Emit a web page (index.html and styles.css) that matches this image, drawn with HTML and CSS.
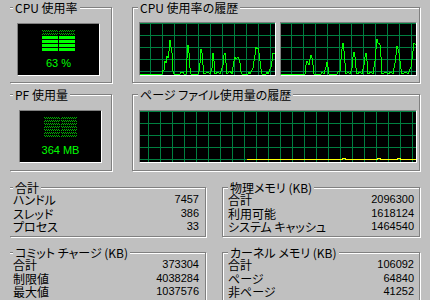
FILE: index.html
```html
<!DOCTYPE html>
<html lang="ja">
<head>
<meta charset="utf-8">
<title>パフォーマンス</title>
<link rel="stylesheet" href="styles.css">
</head>
<body>
<div class="page">
  <div class="row row-top">
    <section class="group group-left">
      <span class="legend legend-left">CPU 使用率</span>
      <div class="meter meter-cpu">
        <svg class="bars" width="33" height="21" viewBox="0 0 33 21" shape-rendering="crispEdges">
          <defs>
            <pattern id="dots1" width="2" height="2" patternUnits="userSpaceOnUse">
              <rect width="1" height="1" fill="#00b000"/><rect x="1" y="1" width="1" height="1" fill="#00b000"/>
            </pattern>
          </defs>
          <g fill="url(#dots1)">
            <rect x="0" y="0" width="16" height="2"/><rect x="17" y="0" width="16" height="2"/>
            <rect x="0" y="3" width="16" height="2"/><rect x="17" y="3" width="16" height="2"/>
          </g>
          <g fill="#00ff00">
            <rect x="0" y="6" width="16" height="3"/><rect x="17" y="6" width="16" height="3"/>
            <rect x="0" y="10" width="16" height="3"/><rect x="17" y="10" width="16" height="3"/>
            <rect x="0" y="14" width="16" height="3"/><rect x="17" y="14" width="16" height="3"/>
            <rect x="0" y="18" width="16" height="3"/><rect x="17" y="18" width="16" height="3"/>
          </g>
        </svg>
        <span class="meter-text">63 %</span>
      </div>
    </section>
    <section class="group group-right">
      <span class="legend">CPU 使用率の履歴</span>
      <div class="graphs">
        <div class="graph">
          <svg width="135" height="52" viewBox="0 0 135 52" shape-rendering="crispEdges">
            <path d="M10.5 0V52M22.5 0V52M34.5 0V52M46.5 0V52M58.5 0V52M70.5 0V52M82.5 0V52M94.5 0V52M106.5 0V52M118.5 0V52M130.5 0V52M0 0.5H135M0 12.5H135M0 24.5H135M0 36.5H135M0 48.5H135" stroke="#008040" fill="none"/>
            <polyline fill="none" stroke="#00ff00" points="0,51 22,51 23,47 24,47 25,38 26,40 27,33 28,35 29,28 30,17 31,24 32,30 33,48 34,51 40,51 41,49 43,49 44,51 46,51 47,35 48,22 49,30 50,45 51,51 58,51 59,48 60,40 61,26 62,30 63,42 64,51 68,49 70,51 72,45 73,30 74,38 75,51 78,49 80,51 83,42 84,32 85,30 86,40 87,51 90,48 92,51 94,38 95,34 96,36 97,35 98,34 99,36 100,40 101,49 102,51 108,51 109,49 110,51 113,45 114,38 115,32 116,24 117,26 118,25 119,30 120,38 121,46 122,51 126,51 127,49 128,51 131,44 132,38 133,30 135,30"/>
          </svg>
        </div>
        <div class="graph">
          <svg width="135" height="52" viewBox="0 0 135 52" shape-rendering="crispEdges">
            <path d="M10.5 0V52M22.5 0V52M34.5 0V52M46.5 0V52M58.5 0V52M70.5 0V52M82.5 0V52M94.5 0V52M106.5 0V52M118.5 0V52M130.5 0V52M0 0.5H135M0 12.5H135M0 24.5H135M0 36.5H135M0 48.5H135" stroke="#008040" fill="none"/>
            <polyline fill="none" stroke="#00ff00" points="0,51 24,51 25,42 26,38 27,40 28,42 29,36 30,32 31,35 32,42 33,51 40,51 41,49 43,51 45,44 46,39 47,44 48,51 56,51 57,49 59,48 60,36 61,26 62,20 63,28 64,40 65,51 67,49 69,51 71,45 72,34 73,29 74,34 75,45 76,51 79,49 81,51 83,42 84,34 85,30 86,38 87,51 90,49 92,51 94,38 95,26 96,16 97,20 98,20 99,22 100,34 101,51 105,49 107,51 110,49 112,51 114,40 115,32 116,23 117,26 118,30 119,38 120,46 121,51 125,49 127,51 130,44 131,36 132,28 133,20 135,22"/>
          </svg>
        </div>
      </div>
    </section>
  </div>

  <div class="row row-mid">
    <section class="group group-left">
      <span class="legend legend-left">PF 使用量</span>
      <div class="meter meter-pf">
        <svg class="bars" width="33" height="21" viewBox="0 0 33 21" shape-rendering="crispEdges">
          <defs>
            <pattern id="dots2" width="2" height="2" patternUnits="userSpaceOnUse">
              <rect width="1" height="1" fill="#00b000"/><rect x="1" y="1" width="1" height="1" fill="#00b000"/>
            </pattern>
          </defs>
          <g fill="url(#dots2)">
            <rect x="0" y="0" width="16" height="2"/><rect x="17" y="0" width="16" height="2"/>
            <rect x="0" y="3" width="16" height="2"/><rect x="17" y="3" width="16" height="2"/>
            <rect x="0" y="6" width="16" height="2"/><rect x="17" y="6" width="16" height="2"/>
            <rect x="0" y="9" width="16" height="2"/><rect x="17" y="9" width="16" height="2"/>
            <rect x="0" y="12" width="16" height="2"/><rect x="17" y="12" width="16" height="2"/>
            <rect x="0" y="15" width="16" height="2"/><rect x="17" y="15" width="16" height="2"/>
            <rect x="0" y="18" width="16" height="2"/><rect x="17" y="18" width="16" height="2"/>
          </g>
        </svg>
        <span class="meter-text">364 MB</span>
      </div>
    </section>
    <section class="group group-right">
      <span class="legend">ページ ファイル使用量の履歴</span>
      <div class="graph graph-pf">
        <svg width="276" height="51" viewBox="0 0 276 51" shape-rendering="crispEdges">
          <path d="M8.5 0V51M20.5 0V51M32.5 0V51M44.5 0V51M56.5 0V51M68.5 0V51M80.5 0V51M92.5 0V51M104.5 0V51M116.5 0V51M128.5 0V51M140.5 0V51M152.5 0V51M164.5 0V51M176.5 0V51M188.5 0V51M200.5 0V51M212.5 0V51M224.5 0V51M236.5 0V51M248.5 0V51M260.5 0V51M272.5 0V51M0 0.5H276M0 12.5H276M0 24.5H276M0 36.5H276M0 48.5H276" stroke="#008040" fill="none"/>
          <path d="M107 48.5H202V47.5H205V48.5H237V47.5H240V48.5H257V47.5H260V48.5H276" stroke="#ffff00" fill="none"/>
        </svg>
      </div>
    </section>
  </div>

  <div class="row row-stats">
    <section class="group group-left">
      <span class="legend legend-left">合計</span>
      <div class="stats stats-left">
        <div class="stat"><span class="label">ハンドル</span><span class="value">7457</span></div>
        <div class="stat"><span class="label">スレッド</span><span class="value">386</span></div>
        <div class="stat"><span class="label">プロセス</span><span class="value">33</span></div>
      </div>
    </section>
    <section class="group group-right">
      <span class="legend">物理メモリ (KB)</span>
      <div class="stats">
        <div class="stat"><span class="label">合計</span><span class="value">2096300</span></div>
        <div class="stat"><span class="label">利用可能</span><span class="value">1618124</span></div>
        <div class="stat"><span class="label">システム キャッシュ</span><span class="value">1464540</span></div>
      </div>
    </section>
  </div>

  <div class="row row-stats row-bottom">
    <section class="group group-left">
      <span class="legend legend-left">コミット チャージ (KB)</span>
      <div class="stats stats-left">
        <div class="stat"><span class="label">合計</span><span class="value">373304</span></div>
        <div class="stat"><span class="label">制限値</span><span class="value">4038284</span></div>
        <div class="stat"><span class="label">最大値</span><span class="value">1037576</span></div>
      </div>
    </section>
    <section class="group group-right">
      <span class="legend">カーネル メモリ (KB)</span>
      <div class="stats">
        <div class="stat"><span class="label">合計</span><span class="value">106092</span></div>
        <div class="stat"><span class="label">ページ</span><span class="value">64840</span></div>
        <div class="stat"><span class="label">非ページ</span><span class="value">41252</span></div>
      </div>
    </section>
  </div>
</div>
</body>
</html>
```
FILE: styles.css
```css
html, body {
  margin: 0;
  padding: 0;
  background: #c0c0c0;
  overflow: hidden;
}

body {
  font-family: "Noto Sans CJK JP", "Noto Sans", sans-serif;
  font-size: 12px;
  color: #000;
  font-feature-settings: "palt";
}

.page {
  display: flex;
  flex-direction: column;
  padding: 7px 0 0 10px;
}

.row {
  display: grid;
}

.row-top {
  grid-template-columns: 102px 288px;
  column-gap: 20px;
  height: 76px;
}

.row-mid {
  grid-template-columns: 102px 288px;
  column-gap: 20px;
  margin-top: 11px;
  height: 77px;
}

.row-stats {
  grid-template-columns: 196px 198px;
  column-gap: 16px;
  margin-top: 16px;
  height: 50px;
}

.row-bottom {
  margin-top: 15px;
  height: 70px;
}

.group {
  box-sizing: border-box;
  border: 1px solid #808080;
  box-shadow: inset 1px 1px 0 #fff, 1px 1px 0 #fff;
  min-width: 0;
}

.group-left {
  border-left: none;
  box-shadow: inset 0 1px 0 #fff, 1px 1px 0 #fff;
}

.legend {
  display: block;
  width: max-content;
  height: 13px;
  margin: -7px 0 0 5px;
  padding: 0 2px;
  background: #c0c0c0;
  line-height: 13px;
  white-space: nowrap;
}

.legend-left {
  margin-left: 3px;
}

.meter {
  box-sizing: border-box;
  width: 83px;
  height: 53px;
  margin: 9px 0 0 7px;
  padding-top: 6px;
  background: #000;
  border: 1px solid;
  border-color: #808080 #fff #fff #808080;
  display: flex;
  flex-direction: column;
  align-items: center;
}

.meter-pf {
  margin-left: 9px;
}

.bars {
  display: block;
}

.meter-text {
  margin-top: 6px;
  color: #00ff00;
  font-family: "Liberation Sans", sans-serif;
  font-size: 11px;
  line-height: 12px;
  white-space: nowrap;
}

.graphs {
  display: flex;
  gap: 4px;
  margin: 8px 0 0 6px;
}

.graph {
  background: #000;
  border: 1px solid;
  border-color: #808080 #fff #fff #808080;
  width: max-content;
}

.graph svg {
  display: block;
}

.graph-pf {
  margin: 9px 0 0 6px;
}

.stats {
  margin-top: -1px;
  padding: 0 5px 0 5px;
}

.stats-left {
  padding: 0 6px 0 3px;
}

.stat {
  display: flex;
  justify-content: space-between;
  align-items: center;
  height: 13.5px;
  line-height: 13.5px;
  white-space: nowrap;
}

.value {
  font-family: "Liberation Sans", sans-serif;
  font-size: 11px;
}
```
